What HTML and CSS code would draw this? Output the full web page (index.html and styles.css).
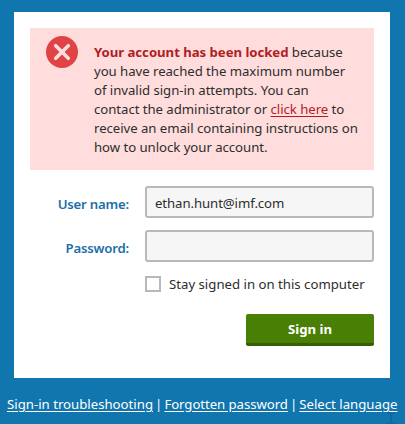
FILE: index.html
```html
<!DOCTYPE html>
<html lang="en">
<head>
<meta charset="utf-8">
<title>Sign in</title>
<link rel="stylesheet" href="styles.css">
</head>
<body>
<main class="card">
  <div class="alert" role="alert">
    <svg class="alert-icon" width="32" height="32" viewBox="0 0 32 32"><circle cx="16" cy="16" r="16" fill="#e04345"/><path d="M9.7 9.7L22.3 22.3M22.3 9.7L9.7 22.3" stroke="#ffdddd" stroke-width="3.6" stroke-linecap="round"/></svg>
    <p class="alert-text"><strong>Your account has been locked</strong> because<br>you have reached the maximum number<br>of invalid sign-in attempts. You can<br>contact the administrator or <a href="#">click here</a> to<br>receive an email containing instructions on<br>how to unlock your account.</p>
  </div>
  <form class="form">
    <label class="label" for="user">User name:</label>
    <input class="input" id="user" type="text" value="ethan.hunt@imf.com">
    <label class="label" for="pass">Password:</label>
    <input class="input" id="pass" type="password">
    <label class="stay"><input class="check" type="checkbox"><span>Stay signed in on this computer</span></label>
    <button class="submit" type="button">Sign in</button>
  </form>
</main>
<footer class="links"><a href="#">Sign-in troubleshooting</a><span class="sep">|</span><a class="forgot" href="#">Forgotten password</a><span class="sep">|</span><a href="#">Select language</a></footer>
<svg class="mark" width="10" height="14" viewBox="0 0 10 14"><path d="M1 2h3l1 1 1-1h3M5 3v9M1 13h3l1-1 1 1h3" fill="none" stroke="#0d699f" stroke-width="2"/></svg>
</body>
</html>
```
FILE: styles.css
```css
* { box-sizing: border-box; }
body {
  position: relative;
  margin: 0;
  padding: 12px 15px 0 14px;
  height: 424px;
  overflow: hidden;
  background: #1175ae;
  color: #2d2d2d;
  font: 13.2px/19px "Noto Sans", "Open Sans", sans-serif;
}
.card { height: 366px; padding: 16px; background: #fff; }
.alert {
  display: flex;
  gap: 16px;
  height: 142px;
  padding: 8px 0 0 16px;
  background: #ffdddd;
}
.alert-icon { flex: none; }
.alert-text { margin: 7px 0 0; white-space: nowrap; letter-spacing: -0.045px; }
.alert strong, .alert a { color: #b01e24; }
.form {
  display: grid;
  grid-template-columns: 99px 229px;
  column-gap: 16px;
  row-gap: 12px;
  padding-top: 16px;
}
.label {
  height: 32px;
  padding-top: 4px;
  line-height: 28px;
  text-align: right;
  font-weight: 600;
  letter-spacing: -0.2px;
  color: #1b6fa8;
}
.input {
  width: 229px;
  height: 32px;
  padding: 2px 8px 0;
  border: 2px solid #b9b9b9;
  border-radius: 3px;
  background: #f6f6f6;
  color: #2d2d2d;
  font: inherit;
  letter-spacing: -0.08px;
}
.stay {
  grid-column: 2;
  display: flex;
  gap: 8px;
  height: 16px;
  margin-top: 2px;
  line-height: 16px;
  white-space: nowrap;
}
.check {
  appearance: none;
  width: 16px;
  height: 16px;
  margin: 0;
  border: 2px solid #b9b9b9;
  background: #fff;
}
.submit {
  grid-column: 2;
  justify-self: end;
  width: 128px;
  height: 32px;
  margin-top: 10px;
  padding: 0;
  border: 0;
  border-bottom: 3px solid #356003;
  border-radius: 2px;
  background: #4a7f05;
  color: #fff;
  font: bold 13.2px "Noto Sans", sans-serif;
}
.links {
  display: flex;
  margin: 17px -20px 0 -7px;
  color: #fff;
  white-space: nowrap;
}
.sep { width: 11.4px; text-align: center; }
.forgot { letter-spacing: -0.06px; }
a { color: inherit; text-decoration: underline; text-underline-offset: 2px; }
.mark { position: absolute; left: 386px; top: 411px; }
```
